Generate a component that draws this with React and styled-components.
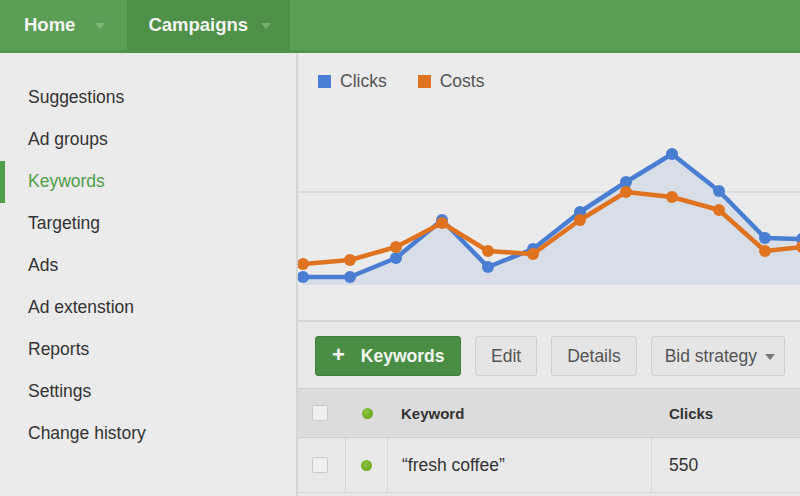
import React from 'react';
import styled, { createGlobalStyle } from 'styled-components';

const GlobalStyle = createGlobalStyle`
  html, body {
    margin: 0;
    padding: 0;
    background: #e9e9e9;
  }
  body {
    font-family: "Liberation Sans", Arial, sans-serif;
    width: 800px;
    height: 496px;
    overflow: hidden;
  }
`;

const clicks = [
  [5, 186], [52, 186], [98, 167], [144, 129], [190, 176], [235, 158],
  [282, 121], [328, 91], [374, 63], [421, 100], [467, 147], [504, 148],
];
const costs = [
  [5, 173], [52, 169], [98, 156], [144, 132], [190, 160], [235, 163],
  [282, 129], [328, 101], [374, 106], [421, 119], [467, 160], [504, 156],
];

const menu = [
  'Suggestions', 'Ad groups', 'Keywords', 'Targeting', 'Ads',
  'Ad extenstion', 'Reports', 'Settings', 'Change history',
];

function Caret({ color }) {
  return (
    <svg width="10" height="6" viewBox="0 0 10 6">
      <path d="M0 0 L10 0 L5 6 Z" fill={color} />
    </svg>
  );
}

function Chart() {
  const line = (pts) => pts.map((p) => p.join(',')).join(' ');
  const area = `M${clicks[0][0]},194 ${clicks.map((p) => `L${p[0]},${p[1]}`).join(' ')} L504,194 Z`;
  return (
    <ChartSvg width="502" height="229" viewBox="0 0 502 229">
      <line x1="0" y1="101" x2="502" y2="101" stroke="#d6d6d6" strokeWidth="1.5" />
      <path d={area} fill="#d8dee7" />
      <polyline points={line(clicks)} fill="none" stroke="#4a7ed3" strokeWidth="4.5" strokeLinejoin="round" />
      {clicks.map(([x, y]) => <circle key={`b${x}`} cx={x} cy={y} r="6" fill="#4a7ed3" />)}
      <polyline points={line(costs)} fill="none" stroke="#e07320" strokeWidth="4.5" strokeLinejoin="round" />
      {costs.map(([x, y]) => <circle key={`o${x}`} cx={x} cy={y} r="6" fill="#e07320" />)}
    </ChartSvg>
  );
}

export default function App() {
  return (
    <>
      <GlobalStyle />
      <Page>
        <TopBar>
          <Tab>
            Home
            <Caret color="#7db777" />
          </Tab>
          <Tab active>
            Campaigns
            <Caret color="#76ad70" />
          </Tab>
        </TopBar>
        <Body>
          <Sidebar>
            {menu.map((item) => (
              <MenuItem key={item} active={item === 'Keywords'}>{item}</MenuItem>
            ))}
          </Sidebar>
          <Main>
            <ChartPanel>
              <Legend>
                <LegendItem>
                  <Swatch color="#4a7ed3" />
                  Clicks
                </LegendItem>
                <LegendItem>
                  <Swatch color="#e07320" />
                  Costs
                </LegendItem>
              </Legend>
              <Chart />
            </ChartPanel>
            <Toolbar>
              <PrimaryButton>
                <Plus>+</Plus>
                Keywords
              </PrimaryButton>
              <Button>Edit</Button>
              <Button>Details</Button>
              <Button dropdown>
                Bid strategy
                <Caret color="#777" />
              </Button>
            </Toolbar>
            <Table>
              <HeadRow>
                <Cell center><CheckBox /></Cell>
                <Cell center><Dot /></Cell>
                <Cell pad="13px">Keyword</Cell>
                <Cell pad="17px">Clicks</Cell>
              </HeadRow>
              <Row>
                <Cell center divider><CheckBox /></Cell>
                <Cell center divider><Dot /></Cell>
                <Cell pad="14px" divider>“fresh coffee”</Cell>
                <Cell pad="17px">550</Cell>
              </Row>
            </Table>
          </Main>
        </Body>
      </Page>
    </>
  );
}

const Page = styled.div`
  width: 800px;
  height: 496px;
  display: flex;
  flex-direction: column;
`;

const TopBar = styled.div`
  height: 50px;
  flex-shrink: 0;
  display: flex;
  background: #5b9e55;
  border-bottom: 3px solid #4d9447;
`;

const Tab = styled.div`
  display: flex;
  align-items: center;
  gap: ${(p) => (p.active ? '13px' : '20px')};
  padding: ${(p) => (p.active ? '0 19px 0 21px' : '0 22px 0 24px')};
  background: ${(p) => (p.active ? '#4f9048' : '#5b9e55')};
  color: #f3f5f2;
  font-size: 18.5px;
  font-weight: bold;
  svg {
    margin-top: 2px;
  }
`;

const Body = styled.div`
  flex: 1;
  display: flex;
  min-height: 0;
`;

const Sidebar = styled.div`
  width: 296px;
  padding-top: 23.5px;
  background: #ebebeb;
  border-right: 2px solid #d5d5d5;
  display: flex;
  flex-direction: column;
`;

const MenuItem = styled.div`
  height: 42px;
  flex-shrink: 0;
  display: flex;
  align-items: center;
  padding-left: 23px;
  font-size: 17.5px;
  color: ${(p) => (p.active ? '#4f9f49' : '#333')};
  border-left: 5px solid ${(p) => (p.active ? '#4f9f49' : 'transparent')};
`;

const Main = styled.div`
  width: 502px;
  display: flex;
  flex-direction: column;
  background: #e9e9e9;
`;

const ChartPanel = styled.div`
  height: 267px;
  flex-shrink: 0;
  background: #ebebeb;
  border-bottom: 2px solid #d5d5d5;
  overflow: hidden;
  display: flex;
  flex-direction: column;
`;

const ChartSvg = styled.svg`
  flex-shrink: 0;
  display: block;
`;

const Legend = styled.div`
  display: flex;
  gap: 31px;
  padding: 18px 0 0 20px;
  height: 20px;
  line-height: 20px;
  flex-shrink: 0;
`;

const LegendItem = styled.div`
  display: flex;
  align-items: center;
  gap: 9px;
  font-size: 17.5px;
  color: #555;
`;

const Swatch = styled.span`
  width: 13px;
  height: 13px;
  background: ${(p) => p.color};
`;

const Toolbar = styled.div`
  height: 40px;
  flex-shrink: 0;
  padding: 14px 17px 12px;
  display: flex;
  gap: 14px;
`;

const Button = styled.div`
  height: 38px;
  flex-shrink: 0;
  white-space: nowrap;
  display: flex;
  align-items: center;
  gap: 8px;
  padding: ${(p) => (p.dropdown ? '0 9px 0 13px' : '0 15px')};
  background: #e5e5e5;
  border: 1px solid #d0d0d0;
  border-radius: 3px;
  color: #555;
  font-size: 17.5px;
  svg {
    margin-top: 1px;
  }
`;

const PrimaryButton = styled(Button)`
  width: 112px;
  padding: 0 16px;
  gap: 16px;
  background: #4a8e45;
  border-color: #3f7e3b;
  color: #f4f7f3;
  font-weight: bold;
`;

const Plus = styled.span`
  font-size: 22px;
  font-weight: bold;
  margin-top: -2px;
`;

const Table = styled.div`
  display: flex;
  flex-direction: column;
`;

const HeadRow = styled.div`
  height: 48px;
  flex-shrink: 0;
  display: grid;
  grid-template-columns: 48px 42px 264px 1fr;
  background: #dcdcdc;
  border-top: 1px solid #cdcdcd;
  font-size: 15px;
  font-weight: bold;
  color: #333;
`;

const Row = styled(HeadRow)`
  height: 54px;
  background: #e9e9e9;
  border-top: 1px solid #d0d0d0;
  border-bottom: 1px solid #d3d3d3;
  font-size: 17.5px;
  font-weight: normal;
`;

const Cell = styled.div`
  display: flex;
  align-items: center;
  justify-content: ${(p) => (p.center ? 'center' : 'flex-start')};
  padding-left: ${(p) => p.pad || '0'};
  border-right: ${(p) => (p.divider ? '1px solid #d6d6d6' : 'none')};
`;

const CheckBox = styled.span`
  width: 14px;
  height: 14px;
  background: #efefef;
  border: 1px solid #cbcbcb;
  border-radius: 2px;
  margin-right: 4px;
`;

const Dot = styled.span`
  width: 11px;
  height: 11px;
  border-radius: 50%;
  background: radial-gradient(circle at 40% 35%, #8cc63f, #5fa012);
`;
